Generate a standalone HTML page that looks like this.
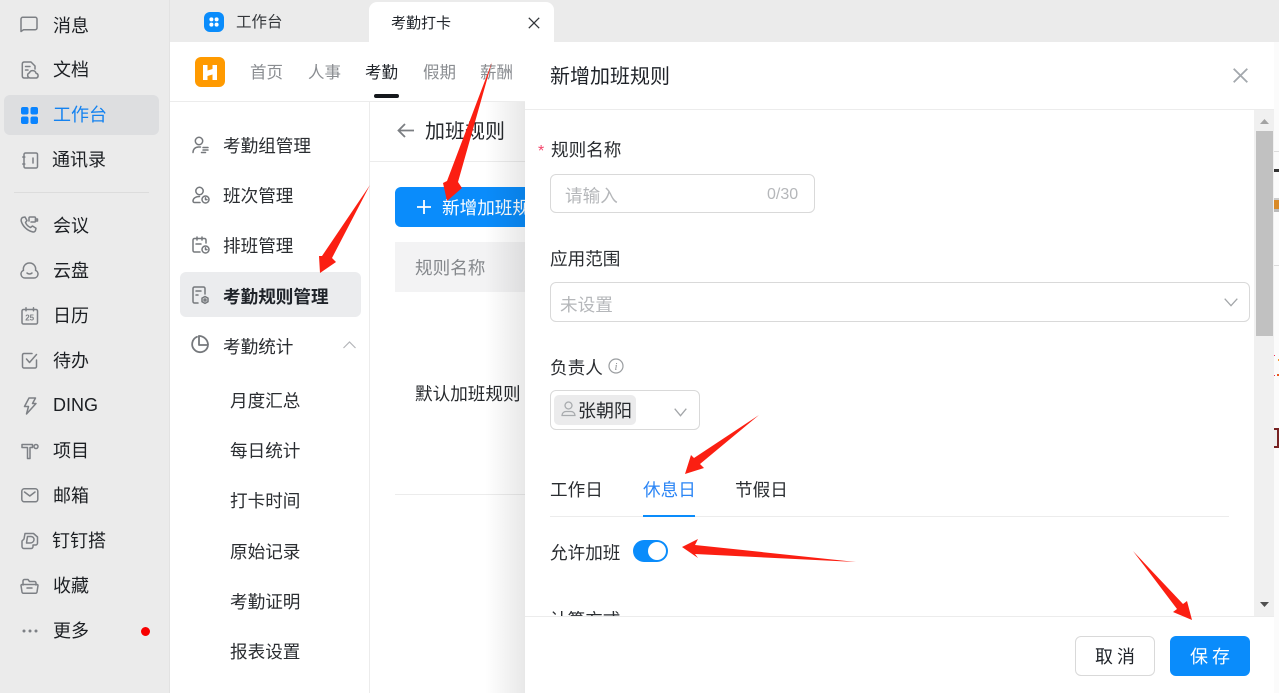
<!DOCTYPE html>
<html lang="zh">
<head>
<meta charset="utf-8">
<style>
html,body{margin:0;padding:0;width:1279px;height:693px;overflow:hidden;background:#fff}
body{font-family:"Liberation Sans","Noto Sans CJK SC",sans-serif;color:#1f2329;position:relative}
.t{position:absolute;white-space:nowrap;line-height:24px;height:24px}
.b{position:absolute;box-sizing:border-box}
.s{font-size:18px;color:#1c1f23}
.g{font-size:16.5px;color:#8a8d91}
.f{font-size:17.6px;color:#2a2d31}
svg{position:absolute;overflow:visible}
.ic{fill:none;stroke:#7d8085;stroke-width:1.5;stroke-linecap:round;stroke-linejoin:round}
.ig{fill:none;stroke:#75787c;stroke-width:1.5;stroke-linecap:round;stroke-linejoin:round}
</style>
</head>
<body>
<!-- left rail -->
<div class="b" style="left:0;top:0;width:170px;height:693px;background:#ebebeb;border-right:1px solid #e2e2e2"></div>
<div class="b" style="left:4px;top:95px;width:155px;height:40px;background:#dddee0;border-radius:6px"></div>
<div class="b" style="left:14px;top:192px;width:135px;height:1px;background:#dcdcdc"></div>

<svg class="ic" style="left:20px;top:16px" width="18" height="18" viewBox="0 0 18 18"><path d="M1 15.500V3a1.800 1.800 0 0 1 1.800-1.800h12.400A1.800 1.800 0 0 1 17 3v9a1.800 1.800 0 0 1-1.800 1.800H3.500z"/></svg>
<svg class="ic" style="left:21px;top:61px" width="18" height="18" viewBox="0 0 18 18"><path d="M7 17H3a2 2 0 0 1-1.700-2V2.800A2 2 0 0 1 3 1h7l4 4v3"/><path d="M4.500 5.500H9M4.500 9H7"/><path d="M9 17a2.700 2.700 0 0 1-.6-5.200 3.500 3.500 0 0 1 6.600.4 2.500 2.500 0 0 1 .5 4.800z"/></svg>
<svg style="left:21px;top:107px" width="17" height="17" viewBox="0 0 17 17" fill="#0a84ff"><rect width="7.500" height="7.500" rx="2"/><rect x="9.500" width="7.500" height="7.500" rx="2"/><rect y="9.500" width="7.500" height="7.500" rx="2"/><rect x="9.500" y="9.500" width="7.500" height="7.500" rx="2"/></svg>
<svg class="ic" style="left:22px;top:152px" width="16" height="17" viewBox="0 0 16 17"><path d="M2 2.500A1.500 1.500 0 0 1 3.500 1h10.700A1.500 1.500 0 0 1 15.500 2.500v12a1.500 1.500 0 0 1-1.500 1.500H3.500A1.500 1.500 0 0 1 2 14.500z"/><path d="M11 6v5M.8 5h2M.8 12h2"/></svg>
<svg class="ic" style="left:20px;top:216px" width="19" height="18" viewBox="0 0 19 18"><path d="M2.500 1.500 5 1l2 3.500-1.500 2c.8 2 2.500 4 5 5l2-1.500 3.500 2.200-.6 2.500c-.5 1-1.500 1.500-2.800 1.200C7 14.500 2.500 10 1.200 5 1 3.500 1.500 2.200 2.500 1.500z"/><path d="M9 5V2a1 1 0 0 1 1-1h4.500a1 1 0 0 1 1 1v3a1 1 0 0 1-1 1H11"/><path d="M15.500 3h2v2h-2z"/></svg>
<svg class="ic" style="left:20px;top:262px" width="19" height="17" viewBox="0 0 19 17"><path d="M5 16A4 4 0 0 1 3.500 8.300 6 6 0 0 1 9.500 1a6 6 0 0 1 6 7.300A4 4 0 0 1 14 16z"/><path d="M7 11c1.500 1.300 3.500 1.300 5 0"/></svg>
<svg class="ic" style="left:21px;top:307px" width="17" height="18" viewBox="0 0 17 18"><rect x="1" y="2.500" width="15.500" height="14.500" rx="1.500"/><path d="M5 .8v3M12.500.8v3"/><text x="8.700" y="13.500" font-size="8" font-weight="700" text-anchor="middle" fill="#7d8085" stroke="none" font-family="Liberation Sans">25</text></svg>
<svg class="ic" style="left:21px;top:352px" width="17" height="17" viewBox="0 0 17 17"><path d="M15.500 8v6.500a1.500 1.500 0 0 1-1.500 1.500H3a1.500 1.500 0 0 1-1.500-1.500V3A1.500 1.500 0 0 1 3 1.500h8"/><path d="m5.500 7 3 3.500 7-8"/></svg>
<svg class="ic" style="left:23px;top:397px" width="14" height="18" viewBox="0 0 14 18"><path d="M6 1h6.500L9.500 6.500H13L3.500 17l2-7.500H1.500z"/></svg>
<svg class="ic" style="left:21px;top:443px" width="18" height="17" viewBox="0 0 18 17"><path d="M1 1.500h10.500v3H9v11H6.500v-11H1z"/><circle cx="15" cy="3.500" r="2"/></svg>
<svg class="ic" style="left:21px;top:488px" width="17" height="15" viewBox="0 0 17 15"><rect x=".8" y=".8" width="16" height="13" rx="2.500"/><path d="m3.500 4 5.300 4 5.200-4"/></svg>
<svg class="ic" style="left:21px;top:532px" width="17" height="17" viewBox="0 0 17 17"><path d="M4 1.500h8.500l4 3.500v6a2 2 0 0 1-2 2H12v1.500a2 2 0 0 1-2 2H3a2 2 0 0 1-2-2V9l2-2z"/><path d="M6.500 4.500H10a3 3 0 0 1 3 3.500c-.3 1.800-2 3-4 3H5.500z"/></svg>
<svg class="ic" style="left:20px;top:578px" width="19" height="16" viewBox="0 0 19 16"><path d="M3 7V3a1.500 1.500 0 0 1 1.500-1.500H8l1.500 2h5A1.500 1.500 0 0 1 16 5v2"/><path d="M1 7.500a1 1 0 0 1 1-1h15a1 1 0 0 1 1 1L17 14a1.500 1.500 0 0 1-1.500 1.200h-12A1.500 1.500 0 0 1 2 14z"/><path d="M7 10h5"/></svg>
<svg style="left:22px;top:629px" width="16" height="4" viewBox="0 0 16 4" fill="#7d8085"><circle cx="2" cy="2" r="1.500"/><circle cx="8" cy="2" r="1.500"/><circle cx="14" cy="2" r="1.500"/></svg>

<div class="t s" style="left:53px;top:14px">消息</div>
<div class="t s" style="left:53px;top:58px">文档</div>
<div class="t s" style="left:53px;top:103px;color:#1482f0">工作台</div>
<div class="t s" style="left:52px;top:148px">通讯录</div>
<div class="t s" style="left:53px;top:214px">会议</div>
<div class="t s" style="left:53px;top:259px">云盘</div>
<div class="t s" style="left:53px;top:304px">日历</div>
<div class="t s" style="left:53px;top:349px">待办</div>
<div class="t s" style="left:53px;top:393px">DING</div>
<div class="t s" style="left:53px;top:439px">项目</div>
<div class="t s" style="left:53px;top:484px">邮箱</div>
<div class="t s" style="left:52px;top:529px">钉钉搭</div>
<div class="t s" style="left:53px;top:574px">收藏</div>
<div class="t s" style="left:53px;top:619px">更多</div>
<div class="b" style="left:141px;top:627px;width:9px;height:9px;border-radius:50%;background:#f80000"></div>

<!-- tab bar -->
<div class="b" style="left:170px;top:0;width:1109px;height:42px;background:#ebebeb"></div>
<div class="b" style="left:369px;top:2px;width:185px;height:42px;background:#fff;border-radius:8px 8px 0 0"></div>
<div class="b" style="left:204px;top:12px;width:20px;height:20px;background:#0a8cfb;border-radius:6px"></div>
<svg style="left:209px;top:17px" width="10" height="10" viewBox="0 0 10 10" fill="#fff"><circle cx="2.400" cy="2.400" r="2"/><circle cx="7.600" cy="2.400" r="2"/><circle cx="2.400" cy="7.600" r="2"/><circle cx="7.600" cy="7.600" r="2"/></svg>
<div class="t" style="left:236px;top:11px;font-size:15.500px;color:#33363a">工作台</div>
<div class="t" style="left:391px;top:12px;font-size:15px;color:#1f2329">考勤打卡</div>
<svg style="left:528px;top:17px" width="12" height="12" viewBox="0 0 12 12" fill="none" stroke="#33363a" stroke-width="1.300"><path d="m.8.800 10.400 10.400M11.200.800.800 11.200"/></svg>

<!-- app header -->
<div class="b" style="left:170px;top:101px;width:360px;height:1px;background:#ececec"></div>
<div class="b" style="left:195px;top:57px;width:30px;height:30px;background:#ff9a00;border-radius:6px"></div>
<svg style="left:203px;top:65px" width="14" height="15" viewBox="0 0 14 15" fill="#fff"><path d="M0 0h4.500v5.500L9.500 4V0H14v15H9.500V9.500L4.500 11v4H0z"/></svg>
<div class="t g" style="left:250px;top:61px">首页</div>
<div class="t g" style="left:308px;top:61px">人事</div>
<div class="t" style="left:365px;top:61px;font-size:16.500px;color:#1f2329">考勤</div>
<div class="t g" style="left:423px;top:61px">假期</div>
<div class="t g" style="left:480px;top:61px">薪酬</div>
<div class="b" style="left:374px;top:94px;width:25px;height:4px;border-radius:2px;background:#15181c"></div>

<!-- sub nav -->
<div class="b" style="left:369px;top:102px;width:1px;height:591px;background:#ececec"></div>
<div class="b" style="left:180px;top:272px;width:181px;height:45px;background:#ebecee;border-radius:6px"></div>
<svg class="ig" style="left:192px;top:136px" width="17" height="18" viewBox="0 0 17 18"><circle cx="7" cy="5" r="3.700"/><path d="M1 16.500c0-3 2-5.500 5.500-5.500h2M11 11.500h5M11 14h5M9.500 16.500h4"/></svg>
<svg class="ig" style="left:192px;top:186px" width="18" height="18" viewBox="0 0 18 18"><circle cx="7.500" cy="5" r="3.700"/><path d="M8 16.500H2.500A1.500 1.500 0 0 1 1 15c0-2.500 2.500-4.500 6.500-4.500"/><circle cx="13.500" cy="13.500" r="3.500"/><path d="M13.500 11.800v1.800h1.500"/></svg>
<svg class="ig" style="left:192px;top:236px" width="18" height="18" viewBox="0 0 18 18"><path d="M8 16H2.500A1.500 1.500 0 0 1 1 14.500V4a1.500 1.500 0 0 1 1.500-1.500h10A1.500 1.500 0 0 1 14 4v3M5 1v3M10 1v3M4 8h5"/><circle cx="13.500" cy="13.500" r="3.500"/><path d="M13.500 11.800v1.800h1.500"/></svg>
<svg class="ig" style="left:192px;top:286px" width="18" height="18" viewBox="0 0 18 18"><path d="M6 17H2.500A1.500 1.500 0 0 1 1 15.500v-13A1.500 1.500 0 0 1 2.500 1h9A1.500 1.500 0 0 1 13 2.500V8M4 5h5M4 9h2"/><circle cx="13" cy="14" r="1"/><path d="m13 10.500 3 1.700v3.500l-3 1.700-3-1.700v-3.500z"/></svg>
<svg class="ig" style="left:191px;top:335px;stroke-width:1.800" width="18" height="18" viewBox="0 0 18 18"><path d="M6 1.800A8 8 0 1 0 16.800 11.500"/><path d="M8 1v9h9"/><path d="M8 1a9 9 0 0 1 9 9"/></svg>
<div class="t f" style="left:223px;top:134px">考勤组管理</div>
<div class="t f" style="left:223px;top:184px">班次管理</div>
<div class="t f" style="left:223px;top:234px">排班管理</div>
<div class="t f" style="left:223px;top:285px;font-weight:700;color:#1f2329">考勤规则管理</div>
<div class="t f" style="left:223px;top:335px">考勤统计</div>
<svg style="left:343px;top:341px" width="13" height="8" viewBox="0 0 13 8" fill="none" stroke="#b4b6b9" stroke-width="1.200"><path d="m.5 7 6-6 6 6"/></svg>
<div class="t f" style="left:230px;top:389px">月度汇总</div>
<div class="t f" style="left:230px;top:439px">每日统计</div>
<div class="t f" style="left:230px;top:489px">打卡时间</div>
<div class="t f" style="left:230px;top:540px">原始记录</div>
<div class="t f" style="left:230px;top:590px">考勤证明</div>
<div class="t f" style="left:230px;top:640px">报表设置</div>

<!-- main content -->
<svg style="left:397px;top:123px" width="17" height="15" viewBox="0 0 17 15" fill="none" stroke="#7b7e82" stroke-width="1.800"><path d="M17 7.500H1.500M8 1 1.500 7.500 8 14"/></svg>
<div class="t" style="left:425px;top:120px;font-size:20px;color:#26292d">加班规则</div>
<div class="b" style="left:370px;top:161px;width:160px;height:1px;background:#ececec"></div>
<div class="b" style="left:395px;top:187px;width:140px;height:40px;background:#0a8cfb;border-radius:6px 0 0 6px"></div>
<svg style="left:417px;top:200px" width="14" height="14" viewBox="0 0 14 14" stroke="#fff" stroke-width="1.800"><path d="M7 0v14M0 7h14"/></svg>
<div class="t" style="left:442px;top:196px;font-size:17.600px;color:#fff;width:84px;overflow:hidden">新增加班规则</div>
<div class="b" style="left:395px;top:242px;width:135px;height:50px;background:#f3f3f4"></div>
<div class="t" style="left:415px;top:256px;font-size:17.600px;color:#85888c">规则名称</div>
<div class="t" style="left:415px;top:382px;font-size:17.600px;color:#26292d">默认加班规则</div>
<div class="b" style="left:395px;top:494px;width:135px;height:1px;background:#ececec"></div>
<div class="b" style="left:485px;top:102px;width:40px;height:591px;background:linear-gradient(90deg,rgba(0,0,0,0),rgba(0,0,0,.09))"></div>

<!-- right strip behind drawer -->
<div class="b" style="left:1274px;top:42px;width:5px;height:651px;background:#fbfbfb"></div>
<div class="b" style="left:1274px;top:151px;width:5px;height:1px;background:#dcdcdc"></div>
<div class="b" style="left:1274px;top:169px;width:5px;height:3px;background:#333"></div>
<div class="b" style="left:1274px;top:198px;width:5px;height:14px;background:linear-gradient(#ccc 0 2px,#d98a28 2px 11px,#bbb 11px)"></div>
<div class="b" style="left:1274px;top:265px;width:5px;height:1px;background:#dcdcdc"></div>
<div class="b" style="left:1274px;top:355px;width:1px;height:1px;background:#f0305a"></div>
<div class="b" style="left:1278px;top:359px;width:1px;height:2px;background:#f59a30"></div>
<div class="b" style="left:1274px;top:375px;width:1px;height:1px;background:#f0305a"></div>
<div class="b" style="left:1277px;top:374px;width:2px;height:2px;background:#e85a20"></div>
<div class="b" style="left:1274px;top:428px;width:5px;height:20px;border:2px solid #722;border-left:0;background:#eee"></div>

<!-- drawer -->
<div class="b" style="left:525px;top:42px;width:749px;height:651px;background:#fff"></div>
<div class="t" style="left:550px;top:65px;font-size:20px;color:#1f2329">新增加班规则</div>
<svg style="left:1233px;top:68px" width="15" height="15" viewBox="0 0 15 15" fill="none" stroke="#a3a8ad" stroke-width="1.800"><path d="m.7.700 13.600 13.600M14.300.700.700 14.300"/></svg>
<div class="b" style="left:525px;top:109px;width:749px;height:1px;background:#ececec"></div>

<!-- scrollbar -->
<div class="b" style="left:1254px;top:110px;width:20px;height:506px;background:#f0f0f0"></div>
<div class="b" style="left:1256px;top:131px;width:17px;height:205px;background:#c1c1c1"></div>
<svg style="left:1260px;top:119px" width="9" height="5" viewBox="0 0 9 5" fill="#a3a3a3"><path d="M4.500 0 9 5H0z"/></svg>
<svg style="left:1260px;top:602px" width="9" height="5" viewBox="0 0 9 5" fill="#505050"><path d="M0 0h9L4.500 5z"/></svg>

<div class="t" style="left:538px;top:140px;font-size:16px;color:#f5456b">*</div>
<div class="t f" style="left:551px;top:138px">规则名称</div>
<div class="b" style="left:550px;top:174px;width:265px;height:39px;border:1px solid #d9d9d9;border-radius:6px"></div>
<div class="t" style="left:565px;top:184px;font-size:17.600px;color:#b5b7ba">请输入</div>
<div class="t" style="left:767px;top:183px;font-size:16px;color:#b5b7ba">0/30</div>

<div class="t f" style="left:550px;top:247px">应用范围</div>
<div class="b" style="left:550px;top:282px;width:700px;height:40px;border:1px solid #d9d9d9;border-radius:6px"></div>
<div class="t" style="left:560px;top:293px;font-size:17.600px;color:#b5b7ba">未设置</div>
<svg style="left:1224px;top:298px" width="14" height="9" viewBox="0 0 14 9" fill="none" stroke="#a3a6a9" stroke-width="1.300"><path d="m.7.700 6.300 7 6.300-7"/></svg>

<div class="t f" style="left:550px;top:356px">负责人</div>
<svg style="left:608px;top:358px" width="16" height="16" viewBox="0 0 16 16"><circle cx="8" cy="8" r="7" fill="none" stroke="#9a9da0" stroke-width="1.200"/><text x="8" y="12" font-size="10" font-style="italic" text-anchor="middle" fill="#85888c" font-family="Liberation Serif">i</text></svg>
<div class="b" style="left:550px;top:390px;width:150px;height:40px;border:1px solid #d9d9d9;border-radius:6px"></div>
<div class="b" style="left:554px;top:395px;width:82px;height:30px;background:#ebebec;border-radius:5px"></div>
<svg style="left:561px;top:401px" width="15" height="16" viewBox="0 0 15 16" fill="none" stroke="#a8abae" stroke-width="1.300"><circle cx="7.500" cy="4.500" r="3.500"/><path d="M1 14.500c0-2.500 2-4 4-4h5c2 0 4 1.500 4 4z"/></svg>
<div class="t" style="left:578px;top:399px;font-size:18px;color:#26292d">张朝阳</div>
<svg style="left:674px;top:408px" width="13" height="9" viewBox="0 0 13 9" fill="none" stroke="#a3a6a9" stroke-width="1.300"><path d="m.7.700 5.800 7 5.800-7"/></svg>

<div class="t f" style="left:550px;top:478px">工作日</div>
<div class="t f" style="left:643px;top:478px;color:#2b85f5">休息日</div>
<div class="t f" style="left:735px;top:478px">节假日</div>
<div class="b" style="left:550px;top:516px;width:679px;height:1px;background:#ececec"></div>
<div class="b" style="left:643px;top:515px;width:52px;height:2px;background:#0a8cfb"></div>

<div class="t f" style="left:550px;top:541px">允许加班</div>
<div class="b" style="left:633px;top:540px;width:35px;height:22px;background:#0a8cfb;border-radius:11px"></div>
<div class="b" style="left:648px;top:542px;width:18px;height:18px;background:#fff;border-radius:50%"></div>
<div class="t f" style="left:550px;top:608px">计算方式</div>

<!-- footer -->
<div class="b" style="left:525px;top:616px;width:749px;height:77px;background:#fff;border-top:1px solid #ececec"></div>
<div class="b" style="left:1075px;top:636px;width:80px;height:40px;border:1px solid #d9d9d9;border-radius:6px;background:#fff"></div>
<div class="t" style="left:1095px;top:645px;font-size:18px;letter-spacing:4px;color:#1f2329">取消</div>
<div class="b" style="left:1170px;top:636px;width:80px;height:40px;border-radius:6px;background:#0a8cfb"></div>
<div class="t" style="left:1190px;top:645px;font-size:18px;letter-spacing:4px;color:#fff">保存</div>

<!-- annotation arrows -->
<svg style="left:0;top:0" width="1279" height="693" viewBox="0 0 1279 693" fill="#fb1f12">
<path d="M492 62 458 182 462 188 447 201 443 183 447 181z"/>
<path d="M370 185 332 258 336 262 320 273 319 256 322 256z"/>
<path d="M759 415 700 464 704 468 685 474 691 455 694 458z"/>
<path d="M856 562 695 554 698 558 682 547 698 539 695 545z"/>
<path d="M1133 551 1183 604 1187 601 1192 620 1173 612 1177 609z"/>
</svg>
</body>
</html>
